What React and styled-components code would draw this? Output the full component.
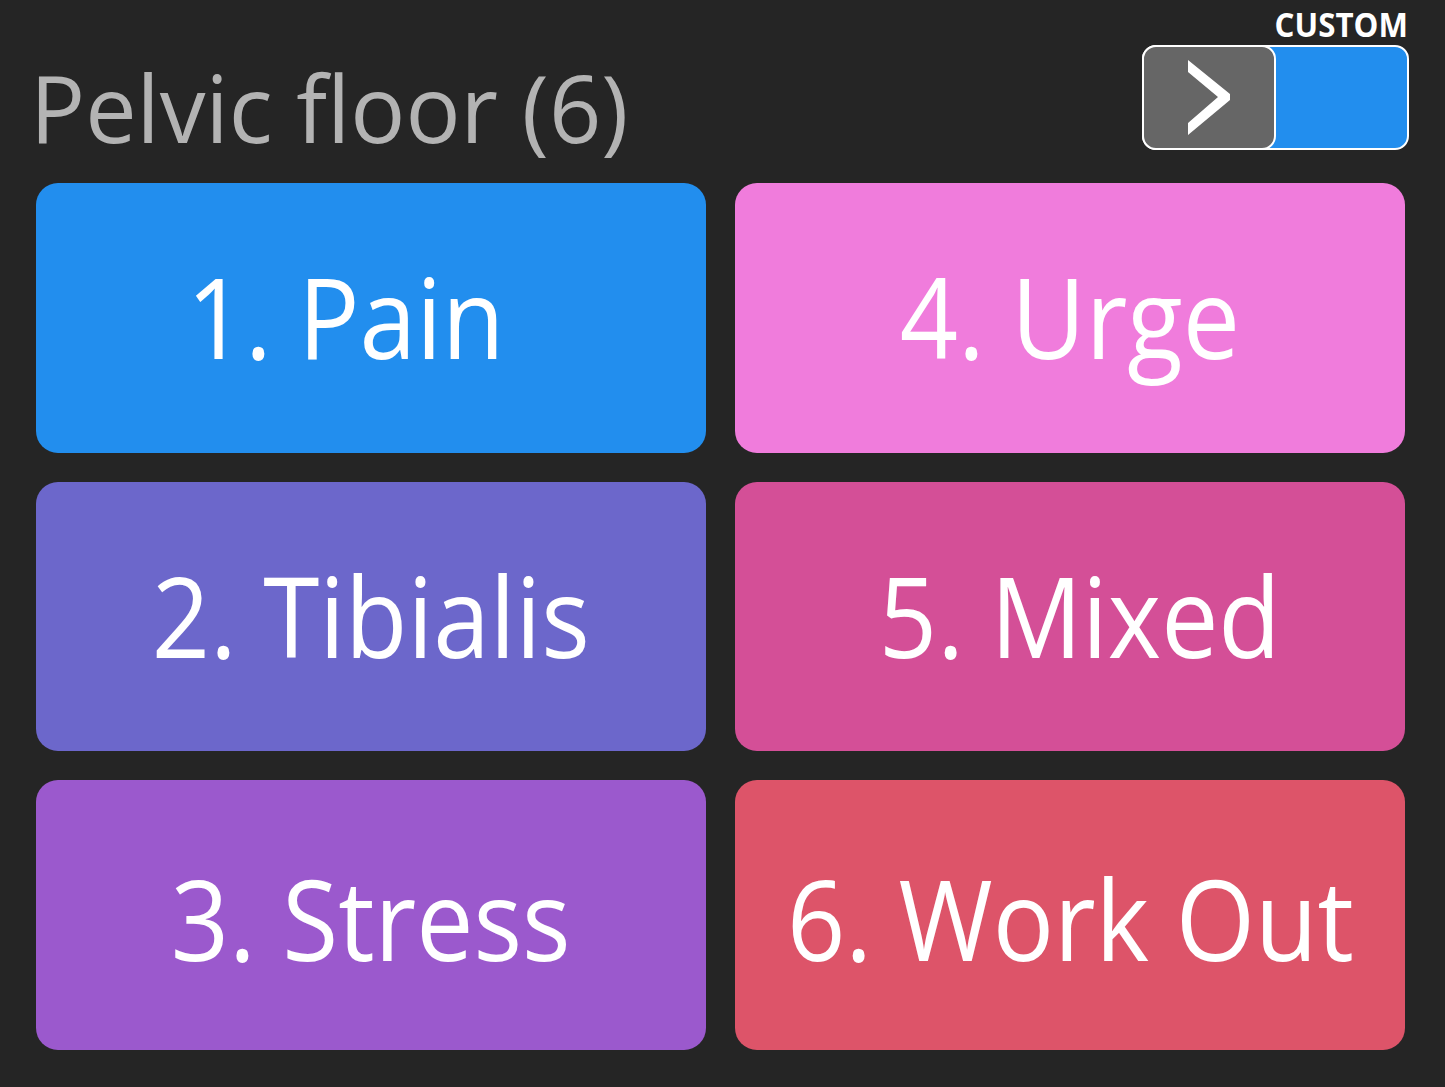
import React from "react";
import styled, { createGlobalStyle } from "styled-components";

const Global = createGlobalStyle`
  html, body { margin: 0; padding: 0; background: #252525; }
  body { font-family: "Open Sans", "Noto Sans", sans-serif; }
  * { box-sizing: border-box; }
`;

const Page = styled.div`
  width: 1445px;
  height: 1087px;
  background: #252525;
  padding: 7px 37px 37px 36px;
  display: flex;
  flex-direction: column;
  overflow: hidden;
`;

const Header = styled.div`
  display: flex;
  justify-content: space-between;
  align-items: flex-start;
  margin-bottom: 29px;
`;

const Title = styled.h1`
  margin: 53px 0 0 -6px;
  font-family: "Open Sans", sans-serif;
  font-weight: 400;
  font-size: 94px;
  line-height: 1;
  color: #b3b3b3;
  white-space: nowrap;
  transform: scaleX(0.975);
  transform-origin: left center;
`;

const ModeBox = styled.div`
  display: flex;
  flex-direction: column;
  align-items: flex-end;
  gap: 4px;
`;

const ModeLabel = styled.div`
  font-family: "Open Sans", sans-serif;
  font-weight: 700;
  font-size: 34px;
  line-height: 1;
  color: #ffffff;
  transform: scaleX(0.92);
  transform-origin: right center;
`;

const Track = styled.div`
  width: 267px;
  height: 105px;
  margin-right: -1px;
  border: 2px solid #ffffff;
  border-radius: 14px;
  background: #228eee;
  display: flex;
`;

const Knob = styled.div`
  width: 134px;
  margin: -2px 0 -2px -2px;
  border: 2px solid #ffffff;
  border-radius: 14px;
  background: #666666;
  display: flex;
  align-items: center;
  justify-content: center;
`;

const Grid = styled.div`
  display: grid;
  grid-template-columns: 670px 670px;
  grid-template-rows: 270px 269px 270px;
  column-gap: 29px;
  row-gap: 29px;
  margin-right: 3px;
`;

const Tile = styled.button`
  border: none;
  border-radius: 22px;
  background: ${(p) => p.$color};
  display: flex;
  align-items: center;
  justify-content: center;
  padding-top: ${(p) => Math.max(0, 2 * p.$dy)}px;
  padding-bottom: ${(p) => Math.max(0, -2 * p.$dy)}px;
  padding-left: ${(p) => Math.max(0, 2 * p.$dx)}px;
  padding-right: ${(p) => Math.max(0, -2 * p.$dx)}px;
  cursor: pointer;
`;

const TileLabel = styled.span`
  font-family: "Open Sans", sans-serif;
  font-weight: 400;
  font-size: 112px;
  line-height: 1;
  color: #ffffff;
  white-space: nowrap;
  transform: scaleX(0.91);
`;

const tiles = [
  { label: "1. Pain", color: "#228eee", dx: -25, dy: -2 },
  { label: "4. Urge", color: "#f07cdc", dx: 0, dy: -2 },
  { label: "2. Tibialis", color: "#6c67cb", dx: 0, dy: -2 },
  { label: "5. Mixed", color: "#d44f97", dx: 10, dy: -2 },
  { label: "3. Stress", color: "#9b59cd", dx: 0, dy: 3 },
  { label: "6. Work Out", color: "#dd5469", dx: 0, dy: 3 },
];

const Chevron = () => (
  <svg width="42" height="75" viewBox="0 0 42 75">
    <polygon
      points="0,0 42,34 42,40 0,75 0,63 30,37 0,12"
      fill="#ffffff"
    />
  </svg>
);

export default function App() {
  return (
    <>
      <Global />
      <Page>
        <Header>
          <Title>Pelvic floor (6)</Title>
          <ModeBox>
            <ModeLabel>CUSTOM</ModeLabel>
            <Track>
              <Knob>
                <Chevron />
              </Knob>
            </Track>
          </ModeBox>
        </Header>
        <Grid>
          {tiles.map((t) => (
            <Tile key={t.label} $color={t.color} $dx={t.dx} $dy={t.dy}>
              <TileLabel>{t.label}</TileLabel>
            </Tile>
          ))}
        </Grid>
      </Page>
    </>
  );
}
